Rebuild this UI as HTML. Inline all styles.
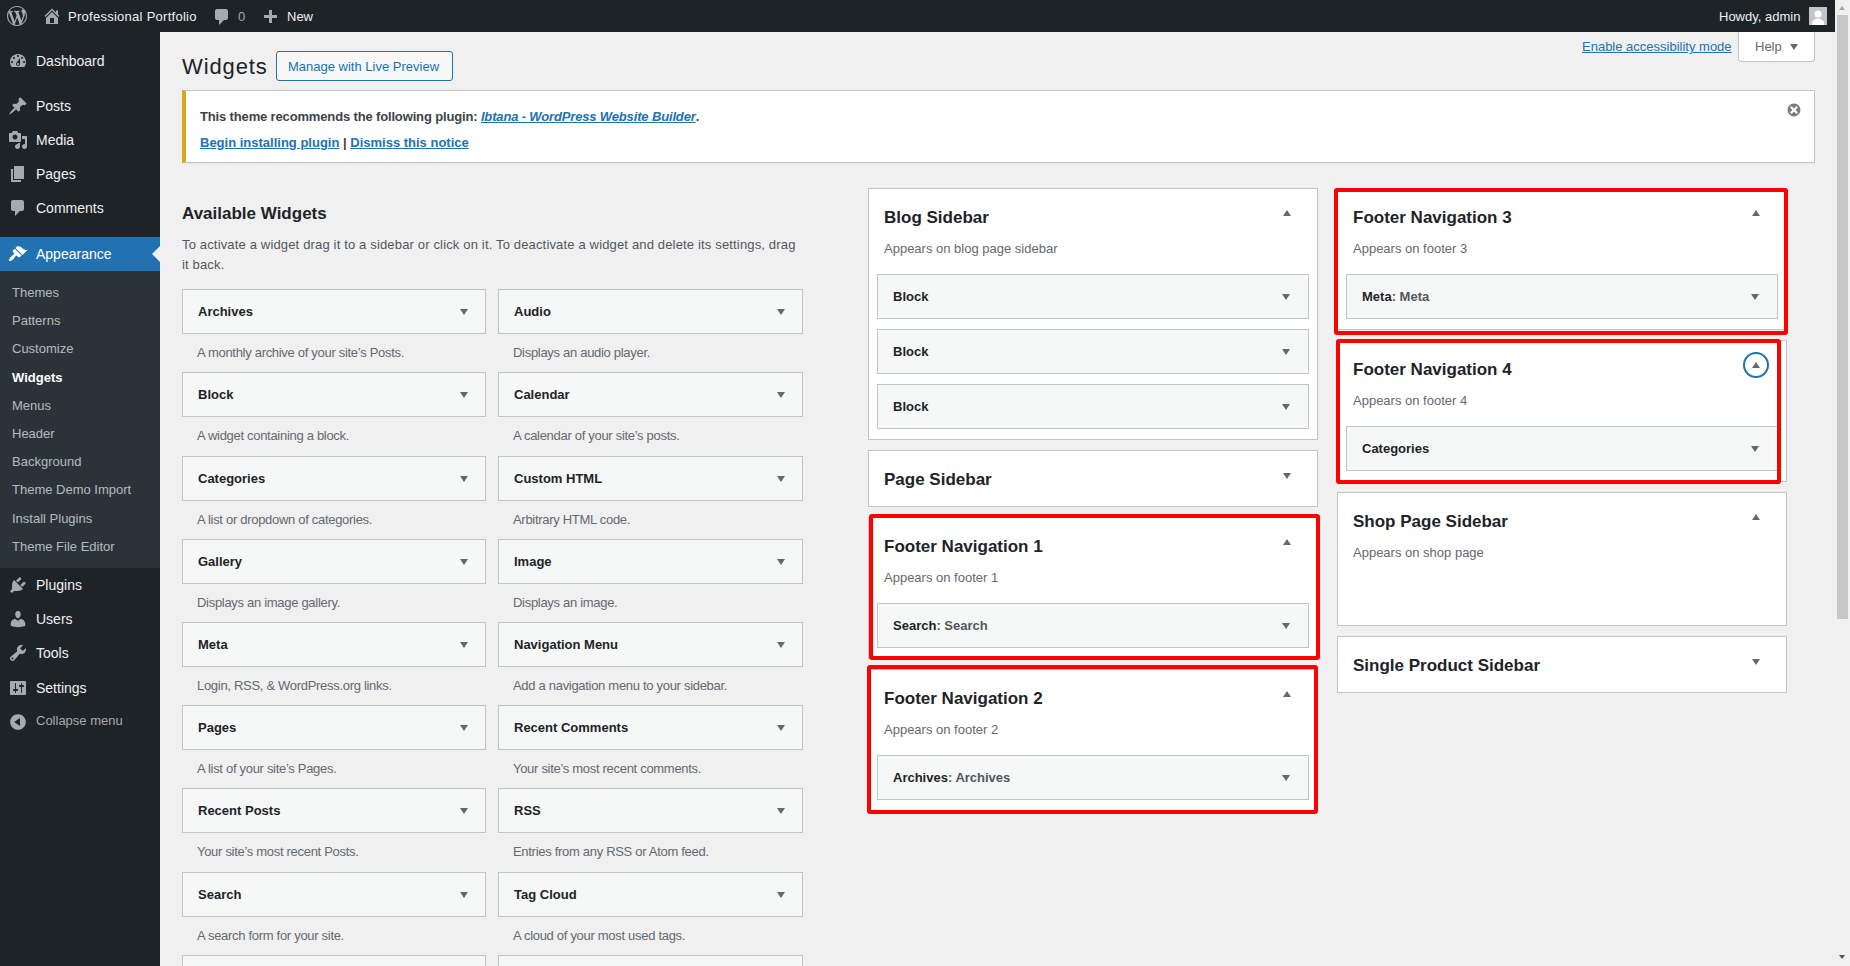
<!DOCTYPE html>
<html><head><meta charset="utf-8">
<style>
*{box-sizing:border-box;margin:0;padding:0}
html,body{width:1850px;height:966px;overflow:hidden;background:#f0f0f1;font-family:"Liberation Sans",sans-serif;font-size:13px;color:#1d2327}
.abs{position:absolute}
#bar{position:absolute;left:0;top:0;width:1835px;height:32px;background:#1d2327;color:#f0f0f1}
#bar .t{position:absolute;top:1px;line-height:32px;font-size:13px;white-space:nowrap}
#menu{position:absolute;left:0;top:32px;width:160px;height:934px;background:#1d2327}
.mi{position:absolute;left:0;width:160px;height:34px;color:#f0f0f1;font-size:14px;line-height:34px}
.mi span{position:absolute;left:36px;top:0}
.mi svg{position:absolute;left:8px;top:7px}
.sub{position:absolute;left:0;top:238px;width:160px;height:297px;background:#2c3338}
.si{position:absolute;left:12px;color:rgba(240,246,252,.7);font-size:13px;line-height:18px;white-space:nowrap}
#scroll{position:absolute;left:1835px;top:0;width:15px;height:966px;background:#f0f0f0}
.wbox{position:absolute;height:45px;background:#f6f7f7;border:1px solid #c3c4c7}
.wbox b{position:absolute;left:15px;top:0;line-height:43px;font-size:13px;font-weight:bold;color:#1d2327;white-space:nowrap}
.arr{position:absolute;width:0;height:0;border-left:4px solid transparent;border-right:4px solid transparent}
.arr.dn{border-top:6px solid #646970}
.arr.up{border-bottom:6px solid #646970}
.wdesc{position:absolute;color:#646970;font-size:13px;line-height:18px;white-space:nowrap;letter-spacing:-0.3px}
.sbox{position:absolute;background:#fff;border:1px solid #c3c4c7}
.sbox h3{position:absolute;left:15px;font-size:17px;font-weight:bold;color:#1d2327;white-space:nowrap;line-height:20px}
.sbox .d{position:absolute;left:15px;color:#646970;font-size:13px;line-height:18px;white-space:nowrap}
.inner{position:absolute;background:#f6f7f7;border:1px solid #c3c4c7;height:45px}
.inner b{position:absolute;left:15px;top:0;line-height:43px;font-weight:bold;color:#1d2327;white-space:nowrap}
.inner b i{font-style:normal;color:#50575e}
.red{position:absolute;border:4px solid #ff0000;border-radius:3px}
</style></head>
<body>
<div id="bar">
  <svg class="abs" style="left:7px;top:6px" width="20" height="20" viewBox="0 0 20 20"><path d="M20 10c0-5.51-4.49-10-10-10C4.48 0 0 4.49 0 10c0 5.52 4.48 10 10 10 5.51 0 10-4.48 10-10zM7.78 15.37L4.37 6.22c.55-.02 1.17-.08 1.17-.08.5-.06.44-1.13-.06-1.11 0 0-1.450.11-2.37.11-.18 0-.37 0-.58-.01C4.12 2.69 6.87 1.11 10 1.11c2.33 0 4.45.87 6.050 2.34-.68-.11-1.65.39-1.65 1.58 0 .74.45 1.36.9 2.1.35.61.55 1.36.55 2.46 0 1.49-1.4 5-1.4 5l-3.03-8.37c.54-.02.82-.17.82-.17.5-.05.44-1.25-.06-1.22 0 0-1.44.12-2.38.12-.87 0-2.33-.12-2.33-.12-.5-.03-.56 1.2-.06 1.22l.92.08 1.26 3.41zM17.41 10c.24-.64.74-1.87.43-4.25.7 1.29 1.05 2.71 1.05 4.25 0 3.29-1.73 6.24-4.4 7.78.97-2.59 1.94-5.2 2.92-7.780zM6.1 18.09C3.12 16.65 1.11 13.53 1.11 10c0-1.3.23-2.48.72-3.59C3.25 10.3 4.67 14.2 6.1 18.09zm4.03-6.63l2.580 6.98c-.86.29-1.76.45-2.71.45-.79 0-1.57-.11-2.29-.33.81-2.38 1.62-4.74 2.42-7.1z" fill="#a7aaad"/></svg>
  <svg class="abs" style="left:42px;top:6px" width="20" height="20" viewBox="0 0 20 20"><path d="M16 8.5l1.53 1.53-1.06 1.06L10 4.62l-6.47 6.47-1.06-1.06L10 2.5l4 4v-2h2v4zm-6-2.46l6 5.99V18H4v-5.97zM12 17v-5H8v5h4z" fill="#a7aaad"/></svg>
  <div class="t" style="left:68px;letter-spacing:0.27px">Professional Portfolio</div>
  <svg class="abs" style="left:212px;top:7px" width="20" height="20" viewBox="0 0 20 20"><path d="M5 2h9c1.1 0 2 .9 2 2v7c0 1.1-.9 2-2 2h-2l-5 5v-5H5c-1.1 0-2-.9-2-2V4c0-1.1.9-2 2-2z" fill="#a7aaad"/></svg>
  <div class="t" style="left:238px;color:#a7aaad">0</div>
  <svg class="abs" style="left:260px;top:8px" width="20" height="20" viewBox="0 0 20 20"><path d="M17 7v3h-5v5H9v-5H4V7h5V2h3v5h5z" fill="#a7aaad"/></svg>
  <div class="t" style="left:287px">New</div>
  <div class="t" style="left:1719px">Howdy, admin</div>
  <div class="abs" style="left:1809px;top:7px;width:18px;height:18px;background:#c3c4c7;overflow:hidden"><svg width="18" height="18" viewBox="0 0 18 18"><circle cx="9" cy="7" r="3.6" fill="#fff"/><path d="M2.5 18 Q3 11.5 9 11.5 Q15 11.5 15.5 18Z" fill="#fff"/></svg></div>
</div>
<div id="menu">
  <div class="mi" style="top:12px;"><svg class="abs" style="left:8px;top:7px" width="20" height="20" viewBox="0 0 20 20"><path d="M3.76 16h12.48c1.1-1.37 1.76-3.11 1.76-5 0-4.42-3.58-8-8-8s-8 3.58-8 8c0 1.89.66 3.63 1.76 5zM10 4c.55 0 1 .45 1 1s-.45 1-1 1-1-.45-1-1 .45-1 1-1zM6 6c.55 0 1 .45 1 1s-.45 1-1 1-1-.45-1-1 .45-1 1-1zm8 0c.55 0 1 .45 1 1s-.45 1-1 1-1-.45-1-1 .45-1 1-1zm-5.37 5.55L12 7v6c0 1.1-.9 2-2 2s-2-.9-2-2c0-.57.24-1.08.63-1.45zM4 10c.55 0 1 .45 1 1s-.45 1-1 1-1-.45-1-1 .45-1 1-1zm12 0c.55 0 1 .45 1 1s-.45 1-1 1-1-.45-1-1 .45-1 1-1zm-5 3c0-.55-.45-1-1-1s-1 .45-1 1 .45 1 1 1 1-.45 1-1z" fill="#a7aaad"/></svg><span style="">Dashboard</span></div>
  <div class="mi" style="top:57px;"><svg class="abs" style="left:8px;top:7px" width="20" height="20" viewBox="0 0 20 20"><path d="M10.44 3.02l1.82-1.82 6.36 6.35-1.83 1.82c-1.05-.68-2.48-.57-3.41.36l-.75.75c-.92.93-1.04 2.35-.35 3.41l-1.83 1.82-2.41-2.41-2.8 2.79c-.42.42-3.38 2.710-3.8 2.29s1.86-3.39 2.28-3.81l2.79-2.79L4.1 9.36l1.83-1.82c1.05.69 2.48.57 3.4-.36l.75-.75c.93-.92 1.05-2.35.36-3.41z" fill="#a7aaad"/></svg><span style="">Posts</span></div>
  <div class="mi" style="top:91px;"><svg class="abs" style="left:8px;top:7px" width="20" height="20" viewBox="0 0 20 20"><path d="M13 11V4c0-.55-.45-1-1-1h-1.67L9 1H5L3.67 3H2c-.55 0-1 .45-1 1v7c0 .55.45 1 1 1h10c.55 0 1-.45 1-1zM7 4.5c1.38 0 2.5 1.12 2.5 2.5S8.38 9.5 7 9.5 4.5 8.38 4.5 7 5.62 4.5 7 4.5zM14 6h5v10.5c0 1.38-1.12 2.5-2.5 2.5S14 17.88 14 16.5s1.12-2.5 2.5-2.5c.17 0 .34.02.5.05V9h-3V6zm-4 8.05V13h2v3.5c0 1.38-1.12 2.5-2.5 2.5S7 17.88 7 16.5 8.12 14 9.5 14c.17 0 .34.02.5.05z" fill="#a7aaad"/></svg><span style="">Media</span></div>
  <div class="mi" style="top:125px;"><svg class="abs" style="left:8px;top:7px" width="20" height="20" viewBox="0 0 20 20"><path d="M6 15V2h10v13H6zm-1 1h8v2H3V5h2v11z" fill="#a7aaad"/></svg><span style="">Pages</span></div>
  <div class="mi" style="top:159px;"><svg class="abs" style="left:8px;top:7px" width="20" height="20" viewBox="0 0 20 20"><path d="M5 2h9c1.1 0 2 .9 2 2v7c0 1.1-.9 2-2 2h-2l-5 5v-5H5c-1.1 0-2-.9-2-2V4c0-1.1.9-2 2-2z" fill="#a7aaad"/></svg><span style="">Comments</span></div>
  <div class="mi" style="top:205px;background:#2271b1;color:#fff;"><svg class="abs" style="left:8px;top:7px" width="20" height="20" viewBox="0 0 20 20"><path d="M14.48 11.06L7.41 3.99l1.5-1.5c.5-.56 2.3-.47 3.51.32 1.21.8 1.43 1.28 2.91 2.1 1.18.64 2.45 1.26 4.45.85zm-.71.71L6.7 4.7 4.93 6.47c-.39.39-.39 1.02 0 1.41l1.06 1.06c.39.39.39 1.03 0 1.42-.6.6-1.43 1.11-2.21 1.69-.35.26-.7.53-1.01.84C1.43 14.23.4 16.08 1.2 16.8c.79.78 2.62-.23 3.96-1.57.31-.31.58-.66.84-1.02.57-.78 1.08-1.61 1.690-2.21.39-.39 1.02-.39 1.41 0l1.06 1.06c.39.39 1.02.39 1.41 0z" fill="#fff"/></svg><span style="">Appearance</span><div class="abs" style="left:152px;top:9px;width:0;height:0;border-top:8px solid transparent;border-bottom:8px solid transparent;border-right:8px solid #f0f0f1"></div></div>
  <div class="sub" style="top:239px">
    <div class="si" style="top:13px">Themes</div>
    <div class="si" style="top:41px">Patterns</div>
    <div class="si" style="top:69px">Customize</div>
    <div class="si" style="top:98px;color:#fff;font-weight:bold">Widgets</div>
    <div class="si" style="top:126px">Menus</div>
    <div class="si" style="top:154px">Header</div>
    <div class="si" style="top:182px">Background</div>
    <div class="si" style="top:210px">Theme Demo Import</div>
    <div class="si" style="top:239px">Install Plugins</div>
    <div class="si" style="top:267px">Theme File Editor</div>
  </div>
  <div class="mi" style="top:536px;"><svg class="abs" style="left:8px;top:7px" width="20" height="20" viewBox="0 0 20 20"><path d="M13.11 4.36L9.87 7.6 8 5.73l3.24-3.24c.35-.34 1.05-.2 1.56.32.52.51.66 1.21.31 1.55zm-8 1.77l.91-1.12 9.01 9.01-1.19.84c-.71.71-2.63 1.16-3.820 1.16H6.14L4.9 17.26c-.59.59-1.54.59-2.12 0-.59-.58-.59-1.53 0-2.12l1.24-1.24v-3.88c0-1.13.4-3.19 1.09-3.89zm7.26 3.97l3.24-3.24c.34-.35 1.04-.21 1.55.31.52.51.66 1.21.31 1.55l-3.24 3.25z" fill="#a7aaad"/></svg><span style="">Plugins</span></div>
  <div class="mi" style="top:570px;"><svg class="abs" style="left:8px;top:7px" width="20" height="20" viewBox="0 0 20 20"><path d="M10 9.25c-2.27 0-2.73-3.44-2.73-3.44C7 4.02 7.82 2 9.97 2c2.16 0 2.98 2.02 2.71 3.81 0 0-.41 3.44-2.68 3.44zm0 2.57L12.72 10c2.39 0 4.52 2.33 4.52 4.53v2.49s-3.65 1.13-7.24 1.13c-3.65 0-7.24-1.13-7.24-1.13v-2.49c0-2.25 1.94-4.48 4.47-4.48z" fill="#a7aaad"/></svg><span style="">Users</span></div>
  <div class="mi" style="top:604px;"><svg class="abs" style="left:8px;top:7px" width="20" height="20" viewBox="0 0 20 20"><path d="M16.68 9.77c-1.34 1.34-3.3 1.67-4.95.99l-5.41 6.52c-.99.99-2.59.99-3.58 0s-.99-2.59 0-3.57l6.52-5.42c-.68-1.65-.35-3.61.99-4.95 1.28-1.28 3.12-1.62 4.72-1.06l-2.89 2.89 2.82 2.82 2.86-2.87c.53 1.58.18 3.39-1.08 4.65zM3.81 16.21c.4.39 1.04.39 1.43 0 .4-.4.4-1.04 0-1.43-.39-.4-1.030-.4-1.43 0-.39.39-.39 1.03 0 1.43z" fill="#a7aaad"/></svg><span style="">Tools</span></div>
  <div class="mi" style="top:639px;"><svg class="abs" style="left:8px;top:7px" width="20" height="20" viewBox="0 0 20 20"><path d="M18 16V4c0-.55-.45-1-1-1H3c-.55 0-1 .45-1 1v12c0 .55.45 1 1 1h14c.55 0 1-.45 1-1zM8 11h1c.55 0 1 .45 1 1s-.45 1-1 1H8v1.5c0 .28-.22.5-.5.5s-.5-.22-.5-.5V13H6c-.55 0-1-.45-1-1s.45-1 1-1h1V5.5c0-.28.22-.5.5-.5s.5.22.5.5V11zm5-2h-1c-.55 0-1-.45-1-1s.45-1 1-1h1V5.5c0-.28.22-.5.5-.5s.5.22.5.5V7h1c.55 0 1 .45 1 1s-.45 1-1 1h-1v5.5c0 .28-.22.5-.5.5s-.5-.22-.5-.5V9z" fill="#a7aaad"/></svg><span style="">Settings</span></div>
  <div class="mi" style="top:673px;color:#a7aaad;font-size:13px"><svg class="abs" style="left:8px;top:7px" width="20" height="20" viewBox="0 0 20 20"><path d="M10 2.16c4.33 0 7.84 3.51 7.84 7.84s-3.51 7.84-7.84 7.84S2.16 14.33 2.16 10 5.71 2.16 10 2.16zm2 11.72V6.12L6.18 9.97z" fill="#a7aaad"/></svg><span style="top:-1px">Collapse menu</span></div>
</div>

<div id="content">
  <div class="abs" style="left:182px;top:50px;font-size:22px;line-height:34px;color:#1d2327;letter-spacing:0.9px">Widgets</div>
  <div class="abs" style="left:276px;top:51px;width:177px;height:30px;border:1px solid #2271b1;border-radius:3px;background:#f6f7f7;color:#2271b1;font-size:13px;line-height:30px;padding-left:11px;white-space:nowrap">Manage with Live Preview</div>
  <div class="abs" style="left:1582px;top:38px;color:#2271b1;text-decoration:underline;line-height:18px;white-space:nowrap">Enable accessibility mode</div>
  <div class="abs" style="left:1738px;top:32px;width:77px;height:30px;background:#fff;border:1px solid #c3c4c7;border-top:0;border-radius:0 0 4px 4px;color:#646970;line-height:30px;padding-left:16px">Help</div>
  <div class="arr dn abs" style="left:1790px;top:44px"></div>

  <div class="abs" style="left:182px;top:90px;width:1633px;height:73px;background:#fff;border:1px solid #c3c4c7;border-left:4px solid #dba617;box-shadow:0 1px 1px rgba(0,0,0,.04)">
    <div class="abs" style="left:14px;top:17px;font-weight:bold;color:#3c434a;line-height:18px;white-space:nowrap;letter-spacing:-0.15px">This theme recommends the following plugin: <i style="color:#2271b1;text-decoration:underline">Ibtana - WordPress Website Builder</i>.</div>
    <div class="abs" style="left:14px;top:43px;font-weight:bold;color:#3c434a;line-height:18px;white-space:nowrap"><span style="color:#2271b1;text-decoration:underline">Begin installing plugin</span> | <span style="color:#2271b1;text-decoration:underline">Dismiss this notice</span></div>
    <svg class="abs" style="left:1600px;top:10.5px" width="16" height="16" viewBox="0 0 20 20"><path d="M10 2c4.42 0 8 3.58 8 8s-3.58 8-8 8-8-3.58-8-8 3.58-8 8-8zm5 11l-3-3 3-3-2-2-3 3-3-3-2 2 3 3-3 3 2 2 3-3 3 3z" fill="#787c82"/></svg>
  </div>

  <div class="abs" style="left:182px;top:202px;font-size:17px;font-weight:bold;line-height:24px;color:#1d2327;white-space:nowrap">Available Widgets</div>
  <div class="abs" style="left:182px;top:235px;width:640px;line-height:20px;color:#50575e;white-space:nowrap;letter-spacing:0.16px">To activate a widget drag it to a sidebar or click on it. To deactivate a widget and delete its settings, drag<br>it back.</div>
  <div class="wbox" style="left:182px;top:289px;width:304px"><b>Archives</b><div class="arr dn" style="left:277px;top:19px"></div></div>
  <div class="wdesc" style="left:197px;top:344px">A monthly archive of your site’s Posts.</div>
  <div class="wbox" style="left:498px;top:289px;width:305px"><b>Audio</b><div class="arr dn" style="left:278px;top:19px"></div></div>
  <div class="wdesc" style="left:513px;top:344px">Displays an audio player.</div>
  <div class="wbox" style="left:182px;top:372px;width:304px"><b>Block</b><div class="arr dn" style="left:277px;top:19px"></div></div>
  <div class="wdesc" style="left:197px;top:427px">A widget containing a block.</div>
  <div class="wbox" style="left:498px;top:372px;width:305px"><b>Calendar</b><div class="arr dn" style="left:278px;top:19px"></div></div>
  <div class="wdesc" style="left:513px;top:427px">A calendar of your site’s posts.</div>
  <div class="wbox" style="left:182px;top:456px;width:304px"><b>Categories</b><div class="arr dn" style="left:277px;top:19px"></div></div>
  <div class="wdesc" style="left:197px;top:511px">A list or dropdown of categories.</div>
  <div class="wbox" style="left:498px;top:456px;width:305px"><b>Custom HTML</b><div class="arr dn" style="left:278px;top:19px"></div></div>
  <div class="wdesc" style="left:513px;top:511px">Arbitrary HTML code.</div>
  <div class="wbox" style="left:182px;top:539px;width:304px"><b>Gallery</b><div class="arr dn" style="left:277px;top:19px"></div></div>
  <div class="wdesc" style="left:197px;top:594px">Displays an image gallery.</div>
  <div class="wbox" style="left:498px;top:539px;width:305px"><b>Image</b><div class="arr dn" style="left:278px;top:19px"></div></div>
  <div class="wdesc" style="left:513px;top:594px">Displays an image.</div>
  <div class="wbox" style="left:182px;top:622px;width:304px"><b>Meta</b><div class="arr dn" style="left:277px;top:19px"></div></div>
  <div class="wdesc" style="left:197px;top:677px">Login, RSS, &amp; WordPress.org links.</div>
  <div class="wbox" style="left:498px;top:622px;width:305px"><b>Navigation Menu</b><div class="arr dn" style="left:278px;top:19px"></div></div>
  <div class="wdesc" style="left:513px;top:677px">Add a navigation menu to your sidebar.</div>
  <div class="wbox" style="left:182px;top:705px;width:304px"><b>Pages</b><div class="arr dn" style="left:277px;top:19px"></div></div>
  <div class="wdesc" style="left:197px;top:760px">A list of your site’s Pages.</div>
  <div class="wbox" style="left:498px;top:705px;width:305px"><b>Recent Comments</b><div class="arr dn" style="left:278px;top:19px"></div></div>
  <div class="wdesc" style="left:513px;top:760px">Your site’s most recent comments.</div>
  <div class="wbox" style="left:182px;top:788px;width:304px"><b>Recent Posts</b><div class="arr dn" style="left:277px;top:19px"></div></div>
  <div class="wdesc" style="left:197px;top:843px">Your site’s most recent Posts.</div>
  <div class="wbox" style="left:498px;top:788px;width:305px"><b>RSS</b><div class="arr dn" style="left:278px;top:19px"></div></div>
  <div class="wdesc" style="left:513px;top:843px">Entries from any RSS or Atom feed.</div>
  <div class="wbox" style="left:182px;top:872px;width:304px"><b>Search</b><div class="arr dn" style="left:277px;top:19px"></div></div>
  <div class="wdesc" style="left:197px;top:927px">A search form for your site.</div>
  <div class="wbox" style="left:498px;top:872px;width:305px"><b>Tag Cloud</b><div class="arr dn" style="left:278px;top:19px"></div></div>
  <div class="wdesc" style="left:513px;top:927px">A cloud of your most used tags.</div>
  <div class="wbox" style="left:182px;top:955px;width:304px"><b></b></div>
  <div class="wbox" style="left:498px;top:955px;width:305px"><b></b></div>
  <div class="sbox" style="left:868px;top:188px;width:450px;height:252px"><h3 style="top:19px">Blog Sidebar</h3><div class="arr up" style="left:414px;top:21px"></div><div class="d" style="top:51px">Appears on blog page sidebar</div><div class="inner" style="left:8px;top:85px;width:432px"><b>Block</b><div class="arr dn" style="left:404px;top:19px"></div></div><div class="inner" style="left:8px;top:140px;width:432px"><b>Block</b><div class="arr dn" style="left:404px;top:19px"></div></div><div class="inner" style="left:8px;top:195px;width:432px"><b>Block</b><div class="arr dn" style="left:404px;top:19px"></div></div></div>
  <div class="sbox" style="left:868px;top:450px;width:450px;height:57px"><h3 style="top:19px">Page Sidebar</h3><div class="arr dn" style="left:414px;top:22px"></div></div>
  <div class="sbox" style="left:868px;top:517px;width:450px;height:142px"><h3 style="top:19px">Footer Navigation 1</h3><div class="arr up" style="left:414px;top:21px"></div><div class="d" style="top:51px">Appears on footer 1</div><div class="inner" style="left:8px;top:85px;width:432px"><b>Search<i>: Search</i></b><div class="arr dn" style="left:404px;top:19px"></div></div></div>
  <div class="sbox" style="left:868px;top:669px;width:450px;height:142px"><h3 style="top:19px">Footer Navigation 2</h3><div class="arr up" style="left:414px;top:21px"></div><div class="d" style="top:51px">Appears on footer 2</div><div class="inner" style="left:8px;top:85px;width:432px"><b>Archives<i>: Archives</i></b><div class="arr dn" style="left:404px;top:19px"></div></div></div>
  <div class="sbox" style="left:1337px;top:188px;width:450px;height:142px"><h3 style="top:19px">Footer Navigation 3</h3><div class="arr up" style="left:414px;top:21px"></div><div class="d" style="top:51px">Appears on footer 3</div><div class="inner" style="left:8px;top:85px;width:432px"><b>Meta<i>: Meta</i></b><div class="arr dn" style="left:404px;top:19px"></div></div></div>
  <div class="sbox" style="left:1337px;top:340px;width:450px;height:142px"><h3 style="top:19px">Footer Navigation 4</h3><div class="arr up" style="left:414px;top:21px"></div><div class="d" style="top:51px">Appears on footer 4</div><div class="inner" style="left:8px;top:85px;width:432px"><b>Categories</b><div class="arr dn" style="left:404px;top:19px"></div></div></div>
  <div class="sbox" style="left:1337px;top:492px;width:450px;height:134px"><h3 style="top:19px">Shop Page Sidebar</h3><div class="arr up" style="left:414px;top:21px"></div><div class="d" style="top:51px">Appears on shop page</div></div>
  <div class="sbox" style="left:1337px;top:636px;width:450px;height:57px"><h3 style="top:19px">Single Product Sidebar</h3><div class="arr dn" style="left:414px;top:22px"></div></div>
  <div class="abs" style="left:1743px;top:352px;width:26px;height:26px;border:2px solid #2271b1;border-radius:50%"></div>
  <div class="red" style="left:869px;top:514px;width:451px;height:146px"></div>
  <div class="red" style="left:867px;top:665px;width:451px;height:149px"></div>
  <div class="red" style="left:1334px;top:188px;width:454px;height:147px"></div>
  <div class="red" style="left:1336px;top:339px;width:445px;height:145px"></div>
</div>
<div id="scroll">
  <div class="abs" style="left:4px;top:6px;width:0;height:0;border-left:3.5px solid transparent;border-right:3.5px solid transparent;border-bottom:4px solid #a3a3a3"></div>
  <div class="abs" style="left:2px;top:15px;width:11px;height:604px;background:#c6c7c9"></div>
  <div class="abs" style="left:4px;top:955px;width:0;height:0;border-left:3.5px solid transparent;border-right:3.5px solid transparent;border-top:4px solid #505050"></div>
</div>
</body></html>
